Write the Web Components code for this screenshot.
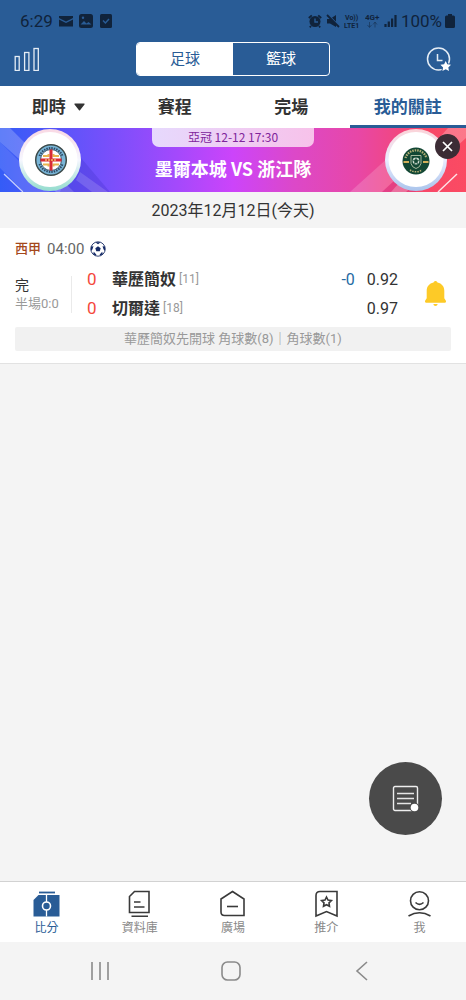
<!DOCTYPE html>
<html lang="zh-Hant">
<head>
<meta charset="utf-8">
<meta name="viewport" content="width=device-width, initial-scale=1">
<title>比分</title>
<style>
html { height: 100%; }
body { margin: 0; min-height: 100%; background: #f4f4f4; color: #333; font-family: Roboto, "Noto Sans CJK TC", sans-serif; }
</style>
</head>
<body>
<score-app>
  <status-bar slot="top"></status-bar>
  <sport-header slot="top"></sport-header>
  <period-tabs slot="top"></period-tabs>
  <promo-banner>
    <span slot="info">亞冠 12-12 17:30</span>
    <span slot="title">墨爾本城 VS 浙江隊</span>
  </promo-banner>
  <date-heading>2023年12月12日(今天)</date-heading>
  <match-card>
    <span slot="league">西甲</span>
    <span slot="time">04:00</span>
    <span slot="state">完</span>
    <span slot="half">半場0:0</span>
    <team-line slot="teams" score="0" rank="[11]" handicap="-0" odds="0.92">華歷簡奴</team-line>
    <team-line slot="teams" score="0" rank="[18]" handicap="" odds="0.97">切爾達</team-line>
    <span slot="note">華歷簡奴先開球 角球數(8)｜角球數(1)</span>
  </match-card>
  <list-button slot="float"></list-button>
  <nav-bar slot="bottom">
    <nav-item icon="score" active>比分</nav-item>
    <nav-item icon="data">資料庫</nav-item>
    <nav-item icon="plaza">廣場</nav-item>
    <nav-item icon="tips">推介</nav-item>
    <nav-item icon="me">我</nav-item>
  </nav-bar>
  <system-keys slot="bottom"></system-keys>
</score-app>

<script>
const RESET = `
  *, *::before { box-sizing: border-box; }
  button, a { font: inherit; color: inherit; margin: 0; padding: 0; border: 0; background: none; text-decoration: none; cursor: pointer; }
  svg { display: block; flex: none; }
`;

function define(name, render) {
  customElements.define(name, class extends HTMLElement {
    constructor() {
      super();
      this.attachShadow({ mode: 'open' });
    }
    connectedCallback() {
      this.shadowRoot.innerHTML = `<style>${RESET}</style>` + render(this);
    }
  });
}

define('score-app', () => `
  <style>
    :host { display: flex; flex-direction: column; min-height: 100vh; }
    main { flex: 1; position: relative; }
    footer { position: sticky; bottom: 0; }
    .float { position: absolute; right: 24px; bottom: 46px; }
  </style>
  <header><slot name="top"></slot></header>
  <main><slot></slot><div class="float"><slot name="float"></slot></div></main>
  <footer><slot name="bottom"></slot></footer>
`);

define('status-bar', () => `
  <style>
    :host { display: flex; justify-content: space-between; align-items: center; height: 42px; padding: 0 11px 0 20px; background: #295c96; color: #10233b; font-size: 17px; line-height: 20px; }
    .group { display: flex; align-items: center; gap: 6px; }
    .right { gap: 4px; }
    .power { display: flex; align-items: center; gap: 3px; }
  </style>
  <div class="group left">
    <span>6:29</span>
    <svg width="14" height="14" viewBox="0 0 14 14"><path d="M0 2h14v2L7 7.600 0 4z M0 5.500l7 3.600 7-3.600V12.500H0z" fill="currentColor"/></svg>
    <svg width="14" height="14" viewBox="0 0 14 14"><rect width="14" height="14" rx="2.500" fill="currentColor"/><path d="M1.500 10.500l3.500-3.500 2.500 2.500 2-1.500 3 2.500z" fill="#295c96"/><circle cx="4" cy="3.800" r="1.200" fill="#295c96"/></svg>
    <svg width="14" height="14" viewBox="0 0 14 14"><rect x="1" width="12" height="14" rx="1.500" fill="currentColor"/><path d="M4 6.500l2.400 2.500L10 5" fill="none" stroke="#295c96" stroke-width="1.500"/></svg>
  </div>
  <div class="group right">
    <svg width="14" height="14" viewBox="0 0 14 14"><circle cx="7" cy="7.500" r="5.500" fill="currentColor"/><path d="M.8 4l3-2.700M13.200 4l-3-2.700M3 12l-1.200 1.300M11 12l1.200 1.300" stroke="currentColor" stroke-width="1.800"/><path d="M7 4.500v3.500h3" fill="none" stroke="#295c96" stroke-width="1.400"/></svg>
    <svg width="14" height="14" viewBox="0 0 14 14"><path d="M1 5h3l6-4v12L4 9.500H1z" fill="currentColor"/><path d="M2 .800l12 11.700" stroke="#295c96" stroke-width="1.500"/><path d="M1 1l12 12" stroke="currentColor" stroke-width="1.800"/></svg>
    <svg width="17" height="16" viewBox="0 0 17 16" font-family="Roboto" font-weight="700" font-size="7" fill="currentColor"><text x="1" y="7">Vo))</text><text x="0" y="15">LTE1</text></svg>
    <svg width="15" height="16" viewBox="0 0 15 16" font-family="Roboto" font-weight="700" font-size="8" fill="currentColor"><text x="0" y="7">4G+</text><path d="M4.500 9v5M2.500 12l2 2.500 2-2.500M10 14.500v-5M8 11.500l2-2.500 2 2.500" fill="none" stroke="currentColor" stroke-width=".8" opacity=".6"/></svg>
    <svg width="13" height="14" viewBox="0 0 13 14"><path d="M1.500 10v3M4.800 7.500v5.500M8.100 4.500v8.500M11.500 1v12" stroke="currentColor" stroke-width="2.200"/></svg>
    <div class="power"><span>100%</span><svg width="10" height="14" viewBox="0 0 10 14"><path d="M3 0h4v1.500h1.500A1.500 1.500 0 0 1 10 3v9.500A1.500 1.500 0 0 1 8.500 14h-7A1.500 1.500 0 0 1 0 12.500V3a1.500 1.500 0 0 1 1.500-1.500H3z" fill="currentColor"/></svg></div>
  </div>
`);

define('sport-header', () => `
  <style>
    :host { display: grid; grid-template-columns: 1fr 194px 1fr; align-items: start; height: 44px; padding: 0 14px; background: #295c96; color: #fff; }
    .switch { display: flex; height: 34px; border: 1px solid #fff; border-radius: 4px; overflow: hidden; font-size: 15px; line-height: 32px; }
    .switch button { flex: 1; }
    .switch .on { background: #fff; color: #295c96; }
    .icon { justify-self: start; margin-top: 5px; }
    .icon.end { justify-self: end; }
  </style>
  <button class="icon" aria-label="統計"><svg width="26" height="24" viewBox="0 0 26 24" fill="none" stroke="#e5edf5" stroke-width="1.300"><rect x="1.200" y="9.500" width="4" height="14"/><rect x="10.600" y="5.500" width="4.300" height="18"/><rect x="20" y="1.500" width="4.300" height="22"/></svg></button>
  <div class="switch"><button class="on">足球</button><button>籃球</button></div>
  <button class="icon end" aria-label="關註時間"><svg width="26" height="25" viewBox="0 0 26 25"><circle cx="12.500" cy="12" r="11" fill="none" stroke="#e5edf5" stroke-width="1.500"/><path d="M11.500 7v6.500h5" fill="none" stroke="#e5edf5" stroke-width="1.500"/><path d="M19.700 14l1.600 3.300 3.700.5-2.700 2.600.7 3.600-3.300-1.700-3.300 1.700.7-3.600-2.700-2.600 3.700-.5z" fill="#fff" stroke="#295c96" stroke-width="2" paint-order="stroke"/></svg></button>
`);

define('period-tabs', () => `
  <style>
    :host { display: block; background: #fff; }
    nav { display: grid; grid-template-columns: repeat(4, 1fr); height: 42px; font-size: 17px; font-weight: 700; line-height: 36px; text-align: center; color: #333; }
    a { display: flex; justify-content: center; align-items: center; gap: 8px; border-bottom: 3px solid transparent; border-top: 3px solid transparent; }
    .on { color: #295c96; border-bottom-color: #295c96; }
  </style>
  <nav><a href="#live">即時<svg width="11" height="8" viewBox="0 0 11 8"><path d="M1 .500h9a.6.6 0 0 1 .5 1L6 7.300a.7.7 0 0 1-1 0L.5 1.500A.6.6 0 0 1 1 .500z" fill="#333"/></svg></a><a href="#schedule">賽程</a><a href="#finished">完場</a><a class="on" href="#follow">我的關註</a></nav>
`);

define('promo-banner', () => `
  <style>
    :host { display: grid; grid-template-columns: 62px 1fr 62px; align-items: center; position: relative; height: 64px; padding: 0 19px; overflow: hidden; color: #fff; font-family: "Noto Sans CJK TC", sans-serif;
      background: linear-gradient(90deg, #345cf7 0%, #7450fb 22%, #a449fc 38%, #cc44fa 50%, #dc48c9 63%, #e847a6 77%, #f74768 91%, #fb4b62 100%); }
    .art { position: absolute; inset: 0; width: 100%; height: 100%; }
    .text { position: relative; align-self: start; display: flex; flex-direction: column; align-items: center; }
    .info { width: 162px; height: 19px; border-radius: 0 0 7px 7px; background: linear-gradient(90deg, #e6d9fd, #f7c2ea); color: #80259c; font-size: 12px; line-height: 18px; text-align: center; }
    .title { margin-top: 8px; font-size: 18px; font-weight: 700; line-height: 26px; white-space: nowrap; }
    .badge { position: relative; }
    button { position: absolute; right: 6px; top: 6px; width: 25px; height: 25px; border-radius: 50%; background: #3c2c35; display: grid; place-items: center; }
  </style>
  <svg class="art" viewBox="0 0 466 64" preserveAspectRatio="none">
    <path d="M0 0h10l64 64H56L0 14z" fill="#fff" opacity=".22"/>
    <path d="M0 14l50 50H24L0 40z" fill="#fff" opacity=".12"/>
    <path d="M76 24l34 40H60z" fill="#3424b8" opacity=".22"/>
    <path d="M80 44l28 20H92L76 52z" fill="#fff" opacity=".15"/>
    <path d="M4 46l19 18" stroke="#fff" stroke-width="1.300" opacity=".7"/>
    <path d="M350 64l60-54 4 24-32 30z" fill="#fff" opacity=".17"/>
    <path d="M382 64l20-18 14 18z" fill="#c42c78" opacity=".25"/>
    <path d="M466 0v10l-60 54h-15L448 0z" fill="#fff" opacity=".25"/>
    <path d="M438 64l19-18" stroke="#fff" stroke-width="1.400" opacity=".85"/>
  </svg>
  <svg class="badge" width="62" height="62" viewBox="0 0 62 62">
    <defs><linearGradient id="ra" x1="0" y1="0" x2="0" y2="1"><stop stop-color="#f9d9e4"/><stop offset=".5" stop-color="#f6f7ff"/><stop offset="1" stop-color="#93dccd"/></linearGradient></defs>
    <circle cx="31" cy="31" r="31" fill="url(#ra)"/><circle cx="31" cy="30.500" r="27.500" fill="#fff"/>
    <circle cx="32" cy="31" r="15.300" fill="#79b5d7" stroke="#3c4a4a" stroke-width="1.500"/>
    <path d="M20.500 27a12.300 12.300 0 0 1 23 0M20.500 35a12.300 12.300 0 0 0 23 0" fill="none" stroke="#2c4a66" stroke-width="2" stroke-dasharray="1.500 1"/>
    <circle cx="32" cy="31" r="10.500" fill="#fff" stroke="#263c52" stroke-width=".8"/>
    <path d="M24 27h5.500v-2M34.500 25v2H40M24 35.500h5.500v2M34.500 37.500v-2H40" fill="none" stroke="#e8b44e" stroke-width="2"/>
    <path d="M32 20.500v21M21.500 31h21" stroke="#d92b36" stroke-width="3"/><path d="M26 31h12" stroke="#efbe63" stroke-width="1.300" stroke-dasharray="2 1"/>
  </svg>
  <div class="text"><div class="info"><slot name="info"></slot></div><div class="title"><slot name="title"></slot></div></div>
  <svg class="badge" width="62" height="62" viewBox="0 0 62 62">
    <defs><linearGradient id="rb" x1="0" y1="0" x2="0" y2="1"><stop stop-color="#fbd3d8"/><stop offset=".5" stop-color="#e9ecff"/><stop offset="1" stop-color="#a9c4ec"/></linearGradient></defs>
    <circle cx="31" cy="31" r="31" fill="url(#rb)"/><circle cx="31" cy="30.500" r="27.500" fill="#fff"/>
    <circle cx="31" cy="32" r="13.500" fill="#124734"/>
    <path d="M20.500 29a11 11 0 0 1 21 0" fill="none" stroke="#b5b077" stroke-width="2.300" stroke-dasharray="1.500 1"/>
    <path d="M25 41a11 11 0 0 0 12 0" fill="none" stroke="#b5b077" stroke-width="1.500" stroke-dasharray="1.500 1"/>
    <path d="M18.500 33h5.500M38 33h5.500" stroke="#d0ae59" stroke-width="2"/>
    <path d="M26 26.500h10v8q-1 4-5 5-4-1-5-5z" fill="none" stroke="#c9d2b6" stroke-width=".8"/>
    <circle cx="31" cy="32" r="3.400" fill="#d5e0d6"/><path d="M31 30l2 1.500-.8 2.300h-2.400l-.8-2.300zM31 28.200v1.800M27.500 31l1.500.5M34.500 31l-1.500.5M29 35.200l.8-1.400M33 35.200l-.8-1.400" fill="#124734" stroke="#124734" stroke-width=".7"/>
  </svg>
  <button aria-label="關閉"><svg width="11" height="11" viewBox="0 0 11 11"><path d="M1 1l9 9M10 1l-9 9" stroke="#fff" stroke-width="1.700"/></svg></button>
`);

define('date-heading', () => `
  <style>:host { display: block; height: 36px; font-size: 16px; line-height: 38px; text-align: center; background: #f4f4f4; color: #333; }</style>
  <slot></slot>
`);

define('team-line', el => `
  <style>
    :host { display: flex; align-items: center; height: 29px; line-height: 29px; font-size: 16px; color: #333; }
    .score { width: 25px; font-size: 17px; color: #f4483c; }
    .name { font-weight: 700; }
    .rank { flex: 1; margin-left: 3px; font-size: 12px; color: #999; }
    .handicap { margin-right: 12px; color: #266ba3; }
  </style>
  <span class="score">${el.getAttribute('score')}</span><span class="name"><slot></slot></span><span class="rank">${el.getAttribute('rank')}</span><span class="handicap">${el.getAttribute('handicap')}</span><span>${el.getAttribute('odds')}</span>
`);

define('match-card', () => `
  <style>
    :host { display: block; padding: 11px 15px 12px; background: #fff; border-bottom: 1px solid #e2e2e2; }
    .head { display: flex; align-items: center; gap: 6px; height: 20px; line-height: 20px; font-size: 15px; color: #666; }
    .league { font-size: 13px; font-weight: 500; color: #a4481c; }
    .body { display: grid; grid-template-columns: 57px 1fr 21px; align-items: center; height: 68px; padding: 6px 5px 4px 0; }
    .state { display: flex; flex-direction: column; height: 37px; justify-content: space-between; border-right: 1px solid #eaeaea; }
    .full { font-size: 14px; line-height: 18px; }
    .half { font-size: 13px; line-height: 18px; color: #999; }
    .teams { padding: 0 27px 0 15px; }
    .note { height: 24px; border-radius: 2px; background: #f1f1f1; color: #999; font-size: 13px; line-height: 24px; text-align: center; white-space: nowrap; }
  </style>
  <div class="head">
    <span class="league"><slot name="league"></slot></span><slot name="time"></slot>
    <svg width="16" height="16" viewBox="0 0 16 16"><circle cx="8" cy="8" r="7.200" fill="#fff" stroke="#1b2f66" stroke-width=".9"/><path d="M8 5.200l2.700 2-1 3.100H6.300L5.300 7.200z" fill="#152a66"/><path d="M5.200 1.300h5.600L8 3.300zM.9 5.500l2.600-.3L2.400 8.500.9 10zM15.100 5.500l-2.600-.3 1.100 3.300 1.500 1.500zM3.200 13.200l.6-2.400 2.500 2.700-.3 1.300zM12.800 13.200l-.6-2.400-2.500 2.700.3 1.300z" fill="#152a66"/></svg>
  </div>
  <div class="body">
    <div class="state"><span class="full"><slot name="state"></slot></span><span class="half"><slot name="half"></slot></span></div>
    <div class="teams"><slot name="teams"></slot></div>
    <button aria-label="提醒"><svg width="21" height="26" viewBox="0 0 21 26" fill="#fdca27"><path d="M10.500 0a2 2 0 0 1 2 1.500c4.300 1 6.800 4 6.800 8.300v7.500l1.300 2c.9 1.400.2 2.400-.8 2.400H1.200c-1 0-1.700-1-.8-2.400l1.300-2V9.800C1.700 5.500 4.200 2.500 8.500 1.500A2 2 0 0 1 10.500 0zM8.300 23h4.400q-.3 2-2.200 2t-2.200-2z"/></svg></button>
  </div>
  <div class="note"><slot name="note"></slot></div>
`);

define('list-button', () => `
  <style>
    :host { display: block; }
    button { display: grid; place-items: center; width: 73px; height: 73px; border-radius: 50%; background: #4a4a4a; }
  </style>
  <button aria-label="列表"><svg width="27" height="27" viewBox="0 0 27 27"><rect x="1.500" y="1.500" width="24" height="24" rx="1.500" fill="none" stroke="#eee" stroke-width="1.400"/><path d="M5 8.500h17M5 13.500h17M5 18.500h14" stroke="#e5e5e5" stroke-width="1.500"/><circle cx="22.500" cy="22.500" r="3.800" fill="#fff" stroke="#4a4a4a" stroke-width="2" paint-order="stroke"/></svg></button>
`);

define('nav-bar', () => `
  <style>
    :host { display: block; background: #fff; border-top: 1px solid #d2d2d2; }
    nav { display: grid; grid-template-columns: repeat(5, 1fr); height: 60px; }
  </style>
  <nav><slot></slot></nav>
`);

const NAV_ICONS = {
  score: '<path d="M7 2.500h16" stroke="currentColor" stroke-width="1.800"/><path d="M6.500 5h21v21.500h-26V10z" fill="currentColor"/><path d="M14.500 4v22.500" stroke="#fff" stroke-width="1.300"/><circle cx="14.500" cy="16" r="4" fill="currentColor" stroke="#fff" stroke-width="1.600"/>',
  data: '<path d="M9.500 1.500H24v21H4.500v-16z"/><path d="M9 12h6.500M9 17h10.500M6.500 26.200h16.500"/>',
  plaza: '<path d="M14.500 1.500l11.500 7.500v16.500H6.500q-3.500 0-3.500-3.500V9z"/><path d="M9 16.500h11"/>',
  tips: '<path d="M8 1.500h17v24.500l-10.500-4.500L4 26V5.500q0-4 4-4z"/><path d="M14.500 7l1.500 3 3.400.5-2.400 2.400.5 3.400-3-1.600-3 1.600.5-3.400-2.400-2.400 3.400-.5z"/>',
  me: '<circle cx="14.500" cy="10.700" r="9"/><path d="M10.500 12.500q4 3.800 8 0M3.500 26q11-6.500 22 0"/>'
};

define('nav-item', el => `
  <style>
    :host { display: block; color: #888; }
    :host([active]) { color: #295c96; }
    a { display: flex; flex-direction: column; align-items: center; padding-top: 8px; font-size: 12px; line-height: 18px; }
    svg { margin-bottom: 1px; color: #3a3a3a; }
    :host([active]) svg { color: #295c96; }
  </style>
  <a href="#${el.getAttribute('icon')}"><svg width="29" height="28" viewBox="0 0 29 28" fill="none" stroke="${el.hasAttribute('active') ? 'none' : 'currentColor'}" stroke-width="1.600">${NAV_ICONS[el.getAttribute('icon')]}</svg><slot></slot></a>
`);

define('system-keys', () => `
  <style>
    :host { display: grid; grid-template-columns: repeat(3, 1fr); height: 58px; padding: 0 38px 0 34px; background: #f4f4f4; }
    button { display: grid; place-items: center; }
    svg { fill: none; stroke: #8a8a8a; stroke-width: 1.6; }
  </style>
  <button aria-label="最近"><svg width="20" height="20" viewBox="0 0 20 20"><path d="M2 1v18M10 1v18M18 1v18"/></svg></button>
  <button aria-label="主頁"><svg width="20" height="20" viewBox="0 0 20 20"><rect x="1" y="1" width="18" height="18" rx="5.500"/></svg></button>
  <button aria-label="返回"><svg width="20" height="20" viewBox="0 0 20 20"><path d="M15 1l-10 9 10 9"/></svg></button>
`);
</script>
</body>
</html>
